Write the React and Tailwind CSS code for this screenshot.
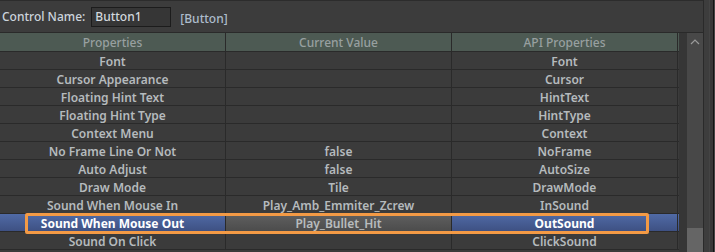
const rows = [
  ['Font', '', 'Font'],
  ['Cursor Appearance', '', 'Cursor'],
  ['Floating Hint Text', '', 'HintText'],
  ['Floating Hint Type', '', 'HintType'],
  ['Context Menu', '', 'Context'],
  ['No Frame Line Or Not', 'false', 'NoFrame'],
  ['Auto Adjust', 'false', 'AutoSize'],
  ['Draw Mode', 'Tile', 'DrawMode'],
  ['Sound When Mouse In', 'Play_Amb_Emmiter_Zcrew', 'InSound'],
  ['Sound When Mouse Out', 'Play_Bullet_Hit', 'OutSound', true],
  ['Sound On Click', '', 'ClickSound'],
];

function Row({ name, value, api, selected }) {
  if (selected) {
    return (
      <div className="relative flex h-[18px] border-b border-[#2a2a2a] bg-gradient-to-b from-[#506aa6] to-[#3e5183] text-white font-bold">
        <div className="w-[226px] pt-[2px] border-r border-[#2a2a2a] flex items-center justify-center">{name}</div>
        <div className="w-[226px] pt-[2px] border-r border-[#2a2a2a] flex items-center justify-center bg-gradient-to-b from-[#606060] to-[#4c4c4c] text-[#b8bcbe] font-semibold">{value}</div>
        <div className="w-[226px] pt-[2px] border-r border-[#2a2a2a] flex items-center justify-center">{api}</div>
        {/* focus outline */}
        <div className="absolute left-[25px] right-[30px] top-[-1px] h-[21px] border-[3px] border-[#f39a45] rounded-[2px]" />
      </div>
    );
  }
  return (
    <div className="flex h-[18px] border-b border-[#2a2a2a]">
      <div className="w-[226px] pt-[2px] border-r border-[#2a2a2a] flex items-center justify-center">{name}</div>
      <div className="w-[226px] pt-[2px] border-r border-[#2a2a2a] flex items-center justify-center">{value}</div>
      <div className="w-[226px] pt-[2px] border-r border-[#2a2a2a] flex items-center justify-center">{api}</div>
    </div>
  );
}

export default function App() {
  return (
    <div
      className="w-[715px] h-[252px] overflow-hidden flex bg-[#3b3b3b] text-[12px] font-semibold text-[#b5babd] leading-none"
      style={{ fontFamily: '"Noto Sans", "Open Sans", sans-serif' }}
    >
      <div className="w-[703px] flex flex-col">
        {/* Top bar */}
        <div className="h-[32px] border-t border-[#2c2c2c] bg-[#3c3c3c] flex items-center pl-[2px]">
          <span className="text-[12px] font-medium text-[#ccd4dc]">Control Name:</span>
          <div className="ml-[6px] w-[80px] h-[20px] bg-[#363636] border border-[#1c1c1c] flex items-center pl-[3px] pt-[1px] text-[12px] font-medium text-[#d2d8de]">
            Button1
          </div>
          <span className="ml-[9px] mt-[5px] text-[12px] font-medium text-[#adbccc]">[Button]</span>
        </div>

        {/* Table */}
        <div className="flex flex-1">
          <div className="w-[679px] flex flex-col">
            <div className="flex h-[20px] border-t border-b border-[#2a2a2a] bg-[#4d5a53] text-[#98a0a0] font-medium">
              <div className="w-[226px] pt-[2px] border-r border-[#2a2a2a] flex items-center justify-center">Properties</div>
              <div className="w-[226px] pt-[2px] border-r border-[#2a2a2a] flex items-center justify-center">Current Value</div>
              <div className="w-[226px] pt-[2px] border-r border-[#2a2a2a] flex items-center justify-center">API Properties</div>
            </div>
            {rows.map(([n, v, a, s]) => (
              <Row key={n} name={n} value={v} api={a} selected={s} />
            ))}
          </div>

          {/* Scrollbar */}
          <div className="w-[8px] bg-[#363636] border-t border-[#2a2a2a]" />
          <div className="w-[16px] flex flex-col bg-[#484848] border-t border-[#2a2a2a]">
            <div className="h-[18px] flex items-center justify-center">
              <svg width="10" height="6" viewBox="0 0 10 6">
                <path d="M1 5 L5 1 L9 5" stroke="#9a9a9a" strokeWidth="1.2" fill="none" />
              </svg>
            </div>
            <div className="flex-1" />
            <div className="h-[24px] bg-[#656565]" />
          </div>
        </div>
      </div>

      {/* Right edge */}
      <div className="w-px bg-[#2a2a2a]" />
      <div className="w-[5px] bg-[#3d3d3d]" />
      <div className="w-[4px] bg-[#393939] border-l border-[#444]" />
      <div className="w-px bg-[#141414]" />
      <div className="w-px bg-[#474747]" />
    </div>
  );
}
